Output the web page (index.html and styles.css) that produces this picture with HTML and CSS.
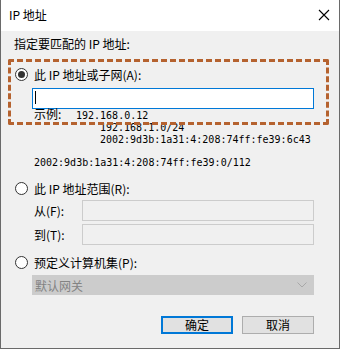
FILE: index.html
```html
<!DOCTYPE html>
<html lang="zh-CN">
<head>
    <meta charset="UTF-8">
    <title>IP 地址</title>
    <link rel="stylesheet" href="styles.css">
</head>
<body>
    <div class="window">
        <div class="titlebar">
            <span class="title">IP 地址</span>
            <svg class="close" width="12" height="12" viewBox="0 0 12 12">
                <path d="M1 1 L11 11 M11 1 L1 11" stroke="#000" stroke-width="1.1" fill="none"/>
            </svg>
        </div>

        <div class="content">
            <div class="heading">指定要匹配的 IP 地址:</div>

            <label class="radio-row first">
                <span class="radio checked"></span>
                <span>此 IP 地址或子网(A):</span>
            </label>
            <div class="text focus"><span class="caret"></span></div>

            <div class="examples">
                <div class="ex-first">
                    <span class="ex-label">示例:</span>
                    <span class="mono">192.168.0.12</span>
                </div>
                <div class="mono indent">192.168.1.0/24</div>
                <div class="mono indent">2002:9d3b:1a31:4:208:74ff:fe39:6c43</div>
                <div class="mono">&nbsp;</div>
                <div class="mono">2002:9d3b:1a31:4:208:74ff:fe39:0/112</div>
            </div>

            <label class="radio-row second">
                <span class="radio"></span>
                <span>此 IP 地址范围(R):</span>
            </label>
            <div class="range-row from">
                <span class="range-label">从(F):</span>
                <div class="text disabled"></div>
            </div>
            <div class="range-row to">
                <span class="range-label">到(T):</span>
                <div class="text disabled"></div>
            </div>

            <label class="radio-row third">
                <span class="radio"></span>
                <span>预定义计算机集(P):</span>
            </label>
            <div class="combo">
                <span>默认网关</span>
                <svg width="10" height="6" viewBox="0 0 10 6">
                    <path d="M0.5 0.5 L5 5 L9.5 0.5" stroke="#a8a8a8" fill="none"/>
                </svg>
            </div>

            <div class="buttons">
                <button class="btn default">确定</button>
                <button class="btn">取消</button>
            </div>
        </div>

        <!-- annotation box -->
        <div class="highlight"></div>
    </div>
</body>
</html>
```

FILE: styles.css
```css
* {
    box-sizing: border-box;
}
body {
    margin: 0;
    background: #f0f0f0;
    font-family: "Noto Sans CJK SC", "Noto Sans", sans-serif;
    font-size: 12px;
    color: #000;
}
.window {
    position: relative;
    width: 340px;
    height: 349px;
    background: #f0f0f0;
    border: 1px solid #6a6a6a;
    border-top: none;
    overflow: hidden;
}
.titlebar {
    height: 31px;
    background: #fff;
    display: flex;
    align-items: center;
    justify-content: space-between;
    padding: 0 9px 1px 8px;
}
.title {
    line-height: 16px;
}
.content {
    padding: 0 25px 0 14px;
}
.heading {
    margin: 5px 0 0 -1px;
    line-height: 16px;
}
.radio-row {
    display: flex;
    align-items: center;
    gap: 6px;
    height: 16px;
}
.radio-row.first { margin-top: 14px; }
.radio-row.second { margin-top: 12px; }
.radio-row.third { margin-top: 9px; }
.radio {
    width: 13px;
    height: 13px;
    border: 1px solid #333;
    border-radius: 50%;
    background: #fff;
    position: relative;
}
.radio.checked::after {
    content: "";
    position: absolute;
    left: 2px;
    top: 2px;
    width: 7px;
    height: 7px;
    border-radius: 50%;
    background: #333;
}
.text {
    width: 282px;
    height: 21px;
    margin: 6px 0 0 17px;
    border: 1px solid #7a7a7a;
    background: #fff;
    padding: 2px 2px 0;
}
.text.focus {
    border-color: #0078d7;
}
.caret {
    display: block;
    width: 1px;
    height: 13px;
    background: #000;
}
.text.disabled {
    width: 232px;
    height: 21px;
    margin: 0;
    border-color: #cccccc;
    background: #f0f0f0;
}
.examples {
    margin: -2px 0 0 19px;
}
.ex-first {
    display: flex;
    align-items: baseline;
    height: 15px;
}
.ex-label {
    width: 42px;
    line-height: 14px;
}
.mono {
    font-family: "DejaVu Sans Mono", "Liberation Mono", monospace;
    font-size: 10px;
    line-height: 11.5px;
    white-space: pre;
}
.indent {
    padding-left: 66px;
}
.range-row {
    display: flex;
    align-items: center;
    padding-left: 19px;
}
.range-row.from { margin-top: 4px; }
.range-row.to { margin-top: 3px; }
.range-label {
    width: 48px;
}
.combo {
    width: 282px;
    height: 20px;
    margin: 5px 0 0 17px;
    background: #cccccc;
    border: 1px solid #cccccc;
    color: #838383;
    display: flex;
    align-items: center;
    justify-content: space-between;
    padding: 0 6px 0 2px;
}
.buttons {
    display: flex;
    justify-content: flex-end;
    gap: 9px;
    margin-top: 21px;
}
.btn {
    width: 72px;
    height: 18px;
    background: #e1e1e1;
    border: 1px solid #adadad;
    font: inherit;
    line-height: 14px;
    padding: 0;
    color: #000;
}
.btn.default {
    border: 2px solid #0078d7;
}
.highlight {
    position: absolute;
    left: 7px;
    top: 59px;
    width: 321px;
    height: 66px;
    border: 3px dashed #b5622f;
    border-radius: 2px;
    pointer-events: none;
}
```
